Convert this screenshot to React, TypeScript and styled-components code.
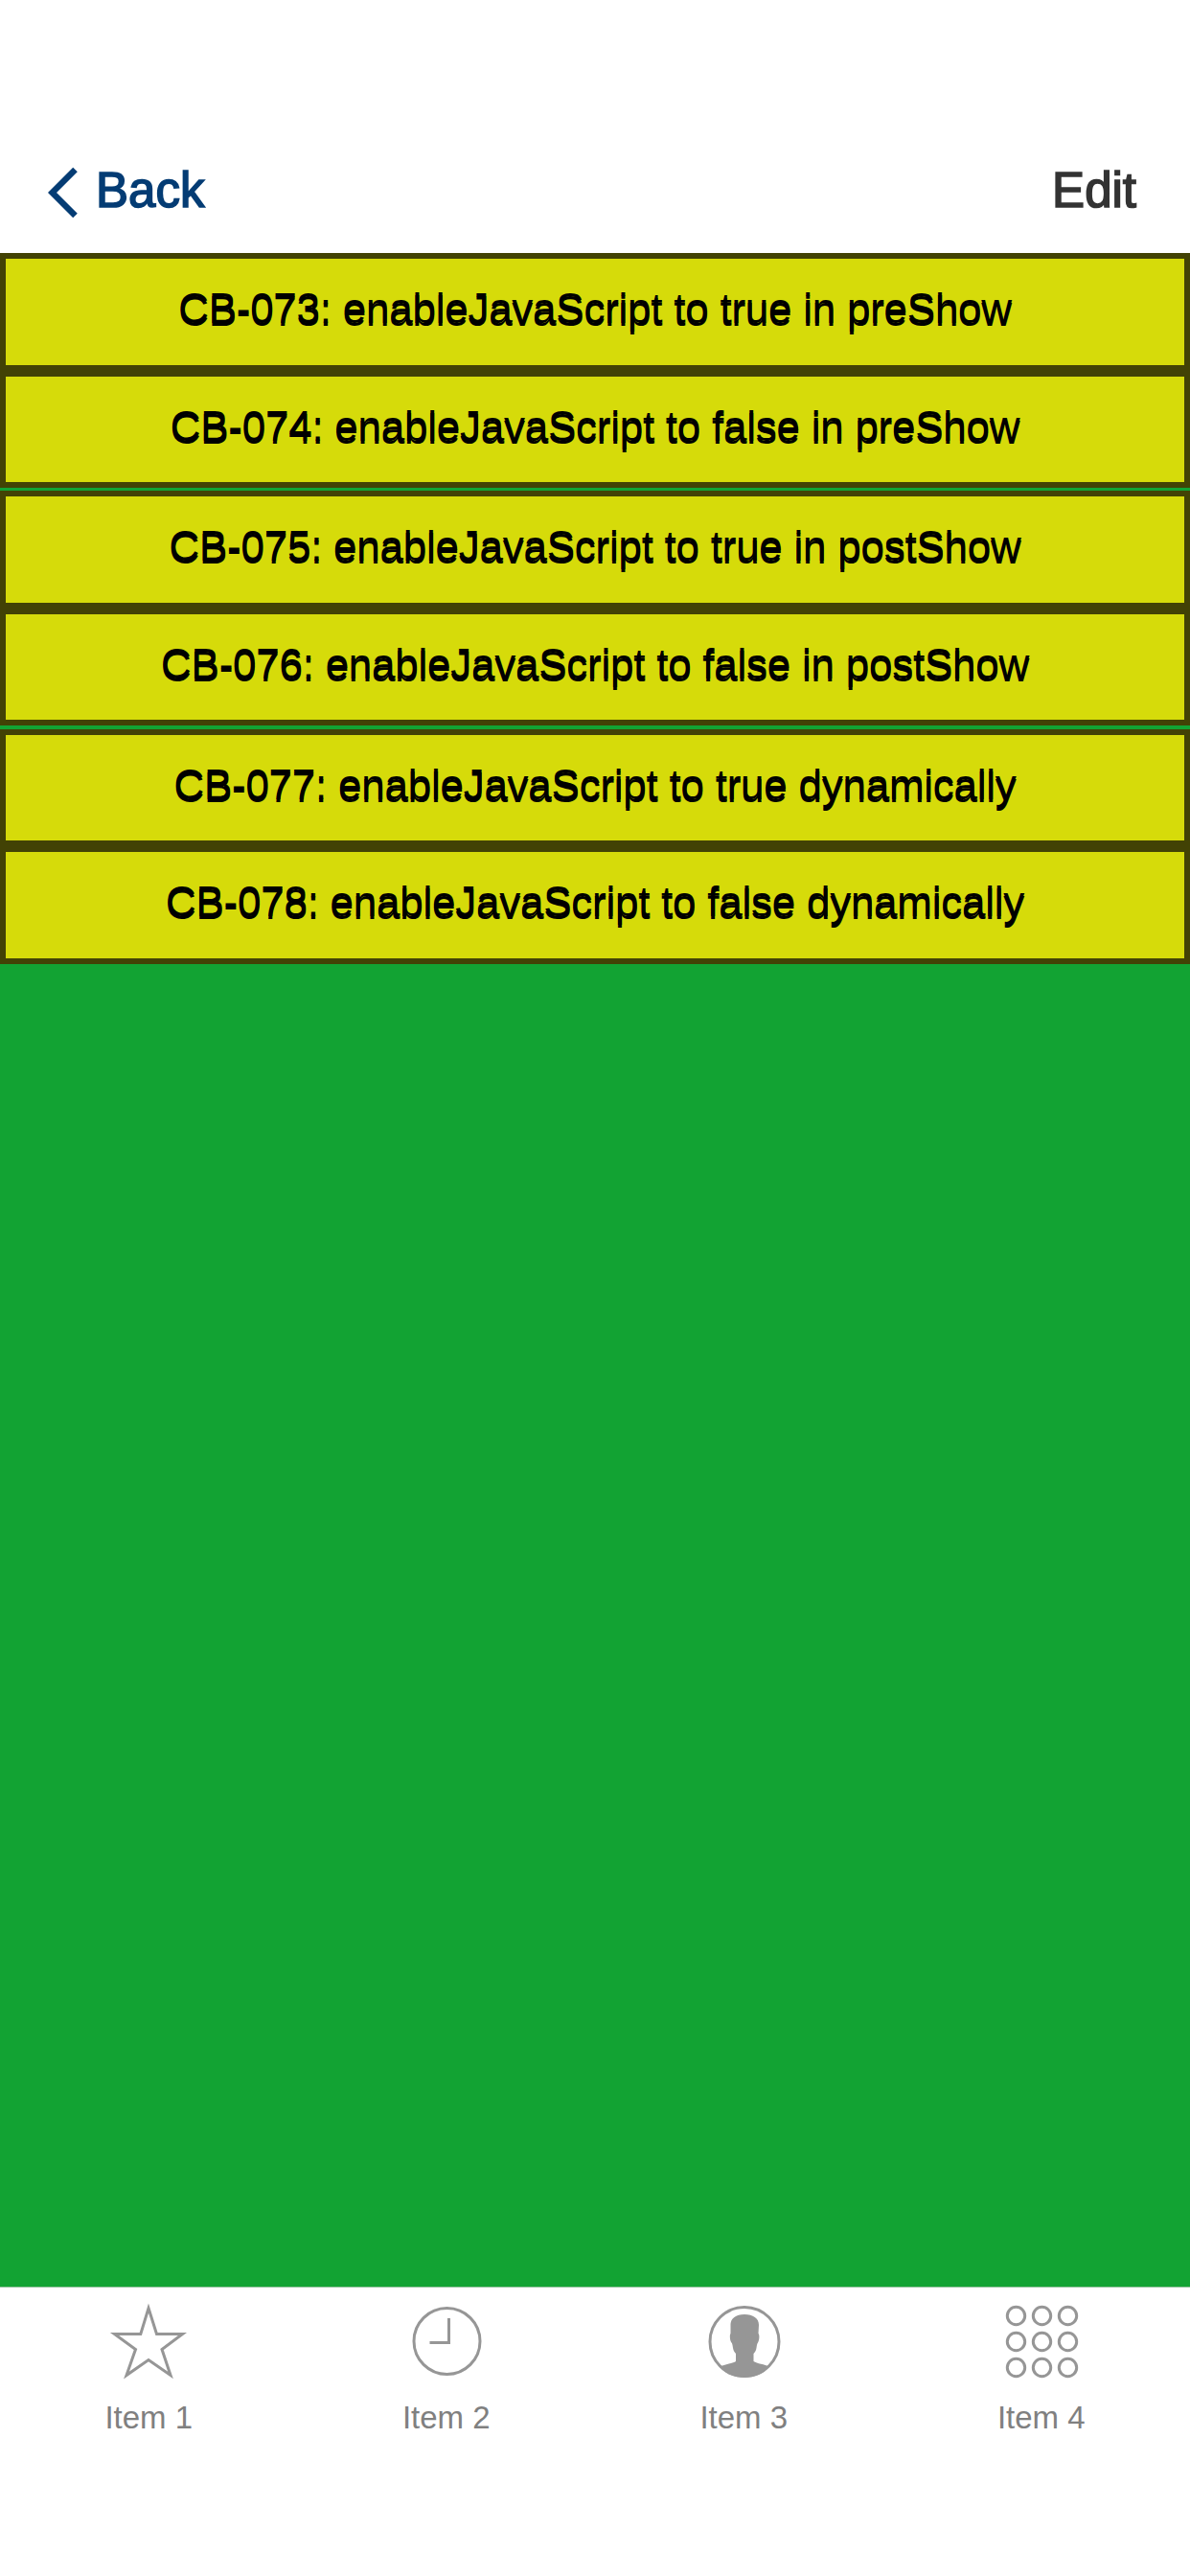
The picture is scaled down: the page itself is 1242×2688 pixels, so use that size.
import React from 'react';
import styled, { createGlobalStyle } from 'styled-components';

const GlobalStyle = createGlobalStyle`
  * { box-sizing: border-box; }
  body { margin: 0; background: #fff; }
`;

const Screen = styled.div`
  width: 1242px;
  height: 2688px;
  display: flex;
  flex-direction: column;
  background: #fff;
  font-family: "Liberation Sans", Arial, sans-serif;
  overflow: hidden;
`;

const Header = styled.header`
  height: 264px;
  flex: none;
  display: flex;
  align-items: flex-end;
  justify-content: space-between;
  padding: 0 56px 36px 50px;
`;

const NavButton = styled.div<{ $color: string }>`
  display: flex;
  align-items: center;
  height: 58px;
  line-height: 58px;
  font-size: 51px;
  color: ${(p) => p.$color};
  -webkit-text-stroke: 1.6px ${(p) => p.$color};
`;

const Chevron = styled.svg`
  width: 50px;
  height: 54px;
  display: block;
  margin-top: 4px;
`;

const Content = styled.main`
  height: 2122px;
  flex: none;
  display: flex;
  flex-direction: column;
  background: #12a333;
`;

const Row = styled.div<{ $height: number; $gap?: number }>`
  height: ${(p) => p.$height}px;
  flex: none;
  display: flex;
  align-items: center;
  justify-content: center;
  padding-bottom: 7px;
  background: #d6db0a;
  border: 6px solid #424205;
  margin-bottom: ${(p) => p.$gap ?? 0}px;
  font-size: 44px;
  line-height: 52px;
  letter-spacing: -0.25px;
  white-space: nowrap;
  color: #000;
  text-shadow: 0 3px 0 #000;
`;

const TabBar = styled.nav`
  flex: 1;
  display: grid;
  grid-template-columns: repeat(4, 1fr);
  border-top: 1px solid #8fc09a;
`;

const Tab = styled.div`
  display: flex;
  flex-direction: column;
  align-items: center;
  padding-top: 12px;
  font-size: 33px;
  line-height: 38px;
  color: #808080;
`;

const TabIcon = styled.svg`
  width: 90px;
  height: 90px;
  display: block;
  margin-bottom: 15px;
  fill: none;
  stroke: #969696;
  stroke-width: 3;
`;

const rows = [
  { text: 'CB-073: enableJavaScript to true in preShow', height: 123 },
  { text: 'CB-074: enableJavaScript to false in preShow', height: 122, gap: 3 },
  { text: 'CB-075: enableJavaScript to true in postShow', height: 123 },
  { text: 'CB-076: enableJavaScript to false in postShow', height: 122, gap: 4 },
  { text: 'CB-077: enableJavaScript to true dynamically', height: 122 },
  { text: 'CB-078: enableJavaScript to false dynamically', height: 123 },
];

const StarIcon = () => (
  <TabIcon viewBox="0 0 90 90">
    <path d="M45 9.500L53.500 36.500H80.500L59 52.500L68 79.500L45 63.500L22 79.500L31.500 52.500L9.500 36.500H36.800Z" />
  </TabIcon>
);

const ClockIcon = () => (
  <TabIcon viewBox="0 0 90 90">
    <circle cx="45.500" cy="44" r="34.500" />
    <path d="M47.500 20V45.500H27.500" />
  </TabIcon>
);

const PersonIcon = () => (
  <TabIcon viewBox="0 0 90 90">
    <circle cx="46" cy="44.500" r="36" />
    <path
      fill="#969696"
      stroke="none"
      d="M46 16C55 16 61 20 61 27L60.500 36C62 37 61.500 43 60 45.500C59 47 59 48 58.500 51C58 54 57 55 55.500 57V65C59 67.500 67 68 72 70.500C66 78 57 82 46 82C35 82 26 78 20 70.500C25 68 33 67.500 37 65V57C35.500 55 34.500 54 34 51C33.500 48 33.500 47 32.500 45.500C30.500 43 30.500 37 31.500 36V27C31.500 20 37 16 46 16Z"
    />
  </TabIcon>
);

const DotsIcon = () => (
  <TabIcon viewBox="0 0 90 90">
    {[17.5, 44.5, 71.5].map((cy) =>
      [18.5, 45.5, 72.5].map((cx) => <circle key={`${cx}-${cy}`} cx={cx} cy={cy} r="9.200" />)
    )}
  </TabIcon>
);

const tabs = [
  { label: 'Item 1', Icon: StarIcon },
  { label: 'Item 2', Icon: ClockIcon },
  { label: 'Item 3', Icon: PersonIcon },
  { label: 'Item 4', Icon: DotsIcon },
];

export default function App() {
  return (
    <>
      <GlobalStyle />
      <Screen>
        <Header>
          <NavButton $color="#043c74">
            <Chevron viewBox="0 0 50 54">
              <path d="M28.500 3L4.500 27L28.500 51" fill="none" stroke="#043c74" strokeWidth="6.500" />
            </Chevron>
            Back
          </NavButton>
          <NavButton $color="#333333">Edit</NavButton>
        </Header>
        <Content>
          {rows.map((row) => (
            <Row key={row.text} $height={row.height} $gap={row.gap}>
              {row.text}
            </Row>
          ))}
        </Content>
        <TabBar>
          {tabs.map(({ label, Icon }) => (
            <Tab key={label}>
              <Icon />
              {label}
            </Tab>
          ))}
        </TabBar>
      </Screen>
    </>
  );
}
